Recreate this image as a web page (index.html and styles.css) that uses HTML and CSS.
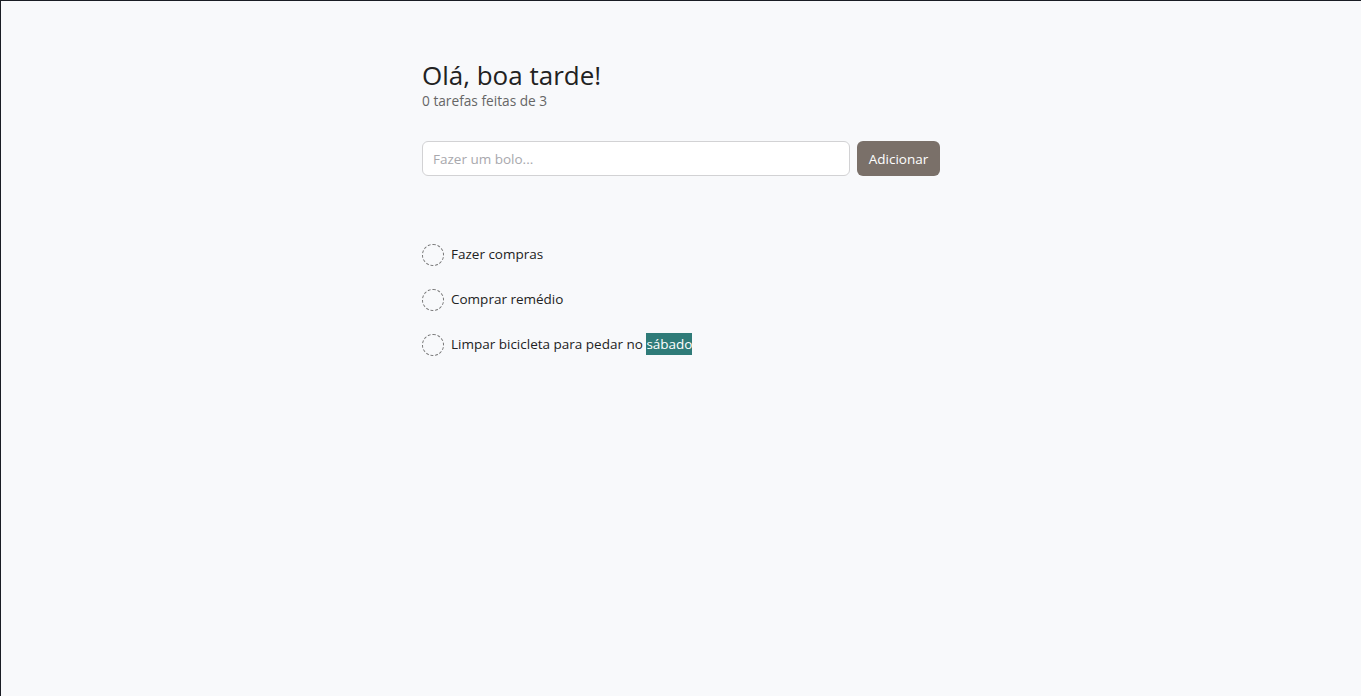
FILE: index.html
```html
<!DOCTYPE html>
<html lang="pt-BR">
<head>
<meta charset="utf-8">
<title>Tarefas</title>
<link rel="stylesheet" href="styles.css">
</head>
<body>
<main class="app">
  <header class="header">
    <h1 class="title">Olá, boa tarde!</h1>
    <p class="subtitle">0 tarefas feitas de 3</p>
  </header>
  <form class="add-form">
    <input class="add-input" type="text" placeholder="Fazer um bolo...">
    <button class="add-btn" type="button">Adicionar</button>
  </form>
  <ul class="tasks">
    <li class="task"><span class="check"></span><span class="task-text">Fazer compras</span></li>
    <li class="task"><span class="check"></span><span class="task-text">Comprar remédio</span></li>
    <li class="task"><span class="check"></span><span class="task-text">Limpar bicicleta para pedar no <span class="sel">sábado</span></span></li>
  </ul>
</main>
</body>
</html>
```
FILE: styles.css
```css
html, body {
  margin: 0;
  padding: 0;
  height: 100%;
}
body {
  background: #f8f9fb;
  border-top: 1px solid #1a1d24;
  border-left: 1px solid #1a1d24;
  box-sizing: border-box;
  font-family: "Open Sans", "Noto Sans", sans-serif;
  color: #222;
}
.app {
  width: 518px;
  margin: 0 auto;
  padding-top: 57px;
}
.header {
  display: flex;
  flex-direction: column;
}
.title {
  margin: 0;
  font-size: 26px;
  font-weight: 400;
  line-height: 34px;
  color: #222;
}
.subtitle {
  margin: 0;
  font-size: 13.7px;
  line-height: 18px;
  color: #666;
}
.add-form {
  display: flex;
  gap: 7px;
  margin-top: 31px;
}
.add-input {
  flex: 1;
  height: 35px;
  box-sizing: border-box;
  border: 1px solid #d2d2d4;
  border-radius: 6px;
  background: #fff;
  padding: 0 10px;
  font-family: inherit;
  font-size: 13.5px;
  color: #333;
  outline: none;
}
.add-input::placeholder {
  color: #a8a8ad;
}
.add-btn {
  width: 83px;
  height: 35px;
  border: none;
  border-radius: 6px;
  background: #7a7069;
  color: #fff;
  font-family: inherit;
  font-size: 13.5px;
  padding: 0;
}
.tasks {
  list-style: none;
  margin: 68px 0 0;
  padding: 0;
  display: flex;
  flex-direction: column;
  gap: 23px;
}
.task {
  display: flex;
  align-items: center;
  gap: 7px;
  height: 22px;
  font-size: 13.5px;
  color: #222;
}
.task-text {
  padding-bottom: 2px;
}
.check {
  width: 22px;
  height: 22px;
  box-sizing: border-box;
  border: 1px dashed #777;
  border-radius: 50%;
  flex: none;
}
.sel {
  background: #2f7b78;
  color: #fff;
  padding: 2px 0;
}
```
